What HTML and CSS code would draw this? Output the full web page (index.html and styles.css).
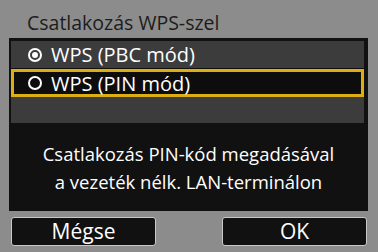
FILE: index.html
```html
<!DOCTYPE html>
<html lang="hu">
<head>
    <meta charset="UTF-8">
    <title>Csatlakozás WPS-szel</title>
    <link rel="stylesheet" href="styles.css">
</head>
<body>
    <div class="screen">
        <!-- Title -->
        <div class="title">Csatlakozás WPS-szel</div>

        <!-- Option list + message -->
        <div class="panel">
            <div class="option">
                <span class="radio checked"></span>
                <span>WPS (PBC mód)</span>
            </div>
            <div class="option selected">
                <span class="radio"></span>
                <span>WPS (PIN mód)</span>
            </div>
            <div class="option empty"></div>
            <div class="message">
                Csatlakozás PIN-kód megadásával<br>
                a vezeték nélk. LAN-terminálon
            </div>
        </div>

        <!-- Buttons -->
        <div class="buttons">
            <div class="btn">Mégse</div>
            <div class="btn">OK</div>
        </div>
    </div>
</body>
</html>
```

FILE: styles.css
```css
body {
    margin: 0;
    background-color: #8c8c8c; /* Camera grey */
    font-family: "Open Sans", "Noto Sans", sans-serif;
}

.screen {
    width: 378px;
    height: 252px;
    display: flex;
    flex-direction: column;
}

.title {
    color: #1c1c1c;
    font-size: 19.5px;
    line-height: 24px;
    padding: 11px 0 0 27px;
    height: 27px;
}

.panel {
    margin: 0 10px 0 9px;
    background-color: #111111;
    padding: 3px 4px 0 2px;
    display: flex;
    flex-direction: column;
    gap: 1px;
}

.option {
    height: 27px;
    background-color: #3c3c3c;
    color: #ffffff;
    font-size: 20px;
    display: flex;
    align-items: center;
    gap: 9px;
    padding-left: 17px;
    box-sizing: border-box;
}

.option.selected {
    background-color: #0d0d0d;
    border: 3px solid #dcae12; /* Yellow cursor */
    padding-left: 14px;
    height: 28px;
}

.option.empty {
    height: 26px;
    margin-top: -1px;
}

.radio {
    width: 10px;
    height: 10px;
    border: 2px solid #ffffff;
    border-radius: 50%;
    position: relative;
    flex-shrink: 0;
}

.radio.checked::after {
    content: "";
    position: absolute;
    left: 2px;
    top: 2px;
    width: 6px;
    height: 6px;
    border-radius: 50%;
    background-color: #ffffff;
}

.message {
    height: 87px;
    color: #ffffff;
    font-size: 18.5px;
    line-height: 28px;
    text-align: center;
    display: flex;
    align-items: center;
    justify-content: center;
    margin: 0 -4px 0 -2px;
}

.buttons {
    display: flex;
    justify-content: space-between;
    padding: 6px 11px 0 11px;
}

.btn {
    width: 145px;
    height: 29px;
    box-sizing: border-box;
    background-color: #111111;
    border: 1px solid #c8c8c8;
    border-radius: 3px;
    color: #ffffff;
    font-size: 21px;
    line-height: 26px;
    text-align: center;
}
```
